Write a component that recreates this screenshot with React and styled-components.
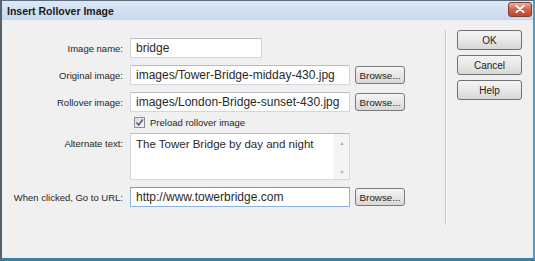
import React from 'react';
import styled, {createGlobalStyle} from 'styled-components';

const GlobalStyle = createGlobalStyle`
  html, body {
    margin: 0;
    padding: 0;
    background: #f0f0f0;
  }
  body {
    font-family: "Liberation Sans", Arial, sans-serif;
  }
`;

const App = () => {
  return (
    <>
      <GlobalStyle />
      <Window>
        <TitleBar>
          <Title>Insert Rollover Image</Title>
          <CloseButton>
            <svg width="10" height="8" viewBox="0 0 10 8">
              <path d="M1.5 1 L8.5 7 M8.5 1 L1.5 7" stroke="#fff" strokeWidth="2" strokeLinecap="round" />
            </svg>
          </CloseButton>
        </TitleBar>
        <Body>
          <FormPanel>
            <Row>
              <Label>Image name:</Label>
              <TextInput $width={132} defaultValue="bridge" />
            </Row>
            <Row $top={7}>
              <Label>Original image:</Label>
              <TextInput $width={220} defaultValue="images/Tower-Bridge-midday-430.jpg" />
              <BrowseButton>Browse...</BrowseButton>
            </Row>
            <Row $top={7}>
              <Label>Rollover image:</Label>
              <TextInput $width={220} defaultValue="images/London-Bridge-sunset-430.jpg" />
              <BrowseButton>Browse...</BrowseButton>
            </Row>
            <CheckRow>
              <Check>
                <svg width="9" height="9" viewBox="0 0 9 9">
                  <path d="M1.5 4.5 L3.6 7 L7.8 1.5" stroke="#4a5f97" strokeWidth="1.6" fill="none" />
                </svg>
              </Check>
              <CheckText>Preload rollover image</CheckText>
            </CheckRow>
            <Row $align="flex-start">
              <Label $padTop={5}>Alternate text:</Label>
              <TextBox>
                <AreaText>The Tower Bridge by day and night</AreaText>
                <ScrollBar>
                  <Arrow>&#9650;</Arrow>
                  <Arrow>&#9660;</Arrow>
                </ScrollBar>
              </TextBox>
            </Row>
            <Row $top={7}>
              <Label>When clicked, Go to URL:</Label>
              <TextInput $width={220} $focused defaultValue="http://www.towerbridge.com" />
              <BrowseButton>Browse...</BrowseButton>
            </Row>
          </FormPanel>
          <Separator />
          <ButtonColumn>
            <DialogButton>OK</DialogButton>
            <DialogButton>Cancel</DialogButton>
            <DialogButton>Help</DialogButton>
          </ButtonColumn>
        </Body>
      </Window>
    </>
  );
};

const Window = styled.div`
  width: 535px;
  height: 261px;
  box-sizing: border-box;
  display: flex;
  flex-direction: column;
  border-top: 1px solid #5c6c7c;
  border-left: 2px solid #56626e;
  border-right: 2px solid #4f9cc8;
  border-bottom: 3px solid #36809f;
  background: #f0f0f0;
  overflow: hidden;
`;

const TitleBar = styled.div`
  height: 20px;
  flex: none;
  display: flex;
  align-items: center;
  justify-content: space-between;
  padding: 0 1px 0 5px;
  background: linear-gradient(#dde8f5, #c6d8ee);
  border-bottom: 1px solid #e8eef6;
  box-sizing: border-box;
`;

const Title = styled.div`
  font-family: "Liberation Sans", Arial, sans-serif;
  font-weight: bold;
  font-size: 10.5px;
  color: #1a1a1a;
`;

const CloseButton = styled.div`
  width: 22px;
  height: 13px;
  margin-top: -3px;
  display: flex;
  align-items: center;
  justify-content: center;
  border: 1px solid #7b4034;
  border-radius: 3px;
  background: linear-gradient(#eab0a0, #d0624c 50%, #c0452e);
`;

const Body = styled.div`
  flex: 1;
  display: flex;
`;

const FormPanel = styled.div`
  width: 443px;
  flex: none;
  box-sizing: border-box;
  padding: 17px 0 0 6px;
  display: flex;
  flex-direction: column;
`;

const Row = styled.div`
  display: flex;
  align-items: ${p => p.$align || 'center'};
  margin-top: ${p => p.$top || 0}px;
`;

const Label = styled.div`
  width: 115px;
  margin-right: 7px;
  flex: none;
  text-align: right;
  font-size: 9.5px;
  color: #262626;
  padding-top: ${p => p.$padTop || 0}px;
`;

const TextInput = styled.input`
  width: ${p => p.$width}px;
  height: 20px;
  box-sizing: border-box;
  border: 1px solid ${p => (p.$focused ? '#8db2dc' : '#d4d6da')};
  border-top-color: ${p => (p.$focused ? '#6a9bd2' : '#b8bbc2')};
  background: #fff;
  padding: 0 5px;
  margin: 0;
  font-family: "Liberation Sans", Arial, sans-serif;
  font-size: 12px;
  color: #2a2a2a;
  outline: none;
`;

const BrowseButton = styled.button`
  width: 50px;
  height: 18px;
  margin-left: 5px;
  padding: 0;
  box-sizing: border-box;
  border: 1px solid #7a7a7a;
  border-radius: 3px;
  background: linear-gradient(#f6f6f6, #e6e6e6 50%, #d8d8d8);
  font-family: "Liberation Sans", Arial, sans-serif;
  font-size: 9.8px;
  color: #1e1e1e;
`;

const CheckRow = styled.div`
  height: 21px;
  display: flex;
  align-items: center;
  padding-left: 126px;
`;

const Check = styled.div`
  width: 11px;
  height: 11px;
  box-sizing: border-box;
  border: 1px solid #8f8f8f;
  background: linear-gradient(135deg, #dcdcdc, #f6f6f6);
  display: flex;
  align-items: center;
  justify-content: center;
  margin-right: 5px;
`;

const CheckText = styled.span`
  font-size: 9.5px;
  color: #262626;
`;

const TextBox = styled.div`
  width: 220px;
  height: 47px;
  box-sizing: border-box;
  display: flex;
  border: 1px solid #d4d6da;
  border-top-color: #b8bbc2;
  background: #fff;
`;

const AreaText = styled.div`
  flex: 1;
  padding: 4px 5px;
  font-size: 11.5px;
  color: #2a2a2a;
  white-space: nowrap;
`;

const ScrollBar = styled.div`
  width: 14px;
  display: flex;
  flex-direction: column;
  justify-content: space-between;
  align-items: center;
  background: #f4f4f4;
  border-left: 1px solid #ececec;
  padding: 6px 0 4px;
`;

const Arrow = styled.span`
  font-size: 5px;
  line-height: 6px;
  color: #a8a8a8;
`;

const Separator = styled.div`
  width: 1px;
  margin: 9px 0 33px;
  background: #c6c6c6;
  border-right: 1px solid #fbfbfb;
`;

const ButtonColumn = styled.div`
  display: flex;
  flex-direction: column;
  gap: 5px;
  padding: 9px 0 0 10px;
`;

const DialogButton = styled.button`
  width: 65px;
  height: 20px;
  padding: 0;
  box-sizing: border-box;
  border: 1px solid #707070;
  border-radius: 3px;
  background: linear-gradient(#f4f4f4, #e8e8e8 50%, #d6d6d6);
  font-family: "Liberation Sans", Arial, sans-serif;
  font-size: 10px;
  color: #1e1e1e;
`;

export default App;
